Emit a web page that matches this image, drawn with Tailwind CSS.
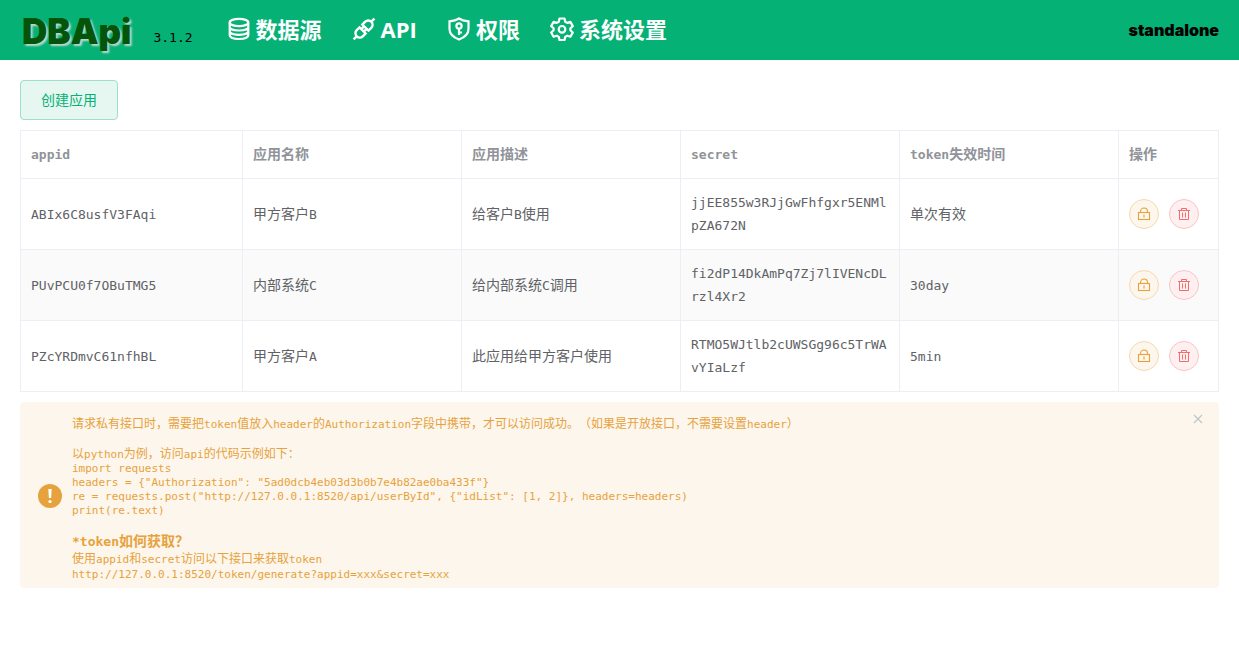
<!DOCTYPE html>
<html lang="zh-CN">
<head>
<meta charset="utf-8">
<meta name="viewport" content="width=device-width, initial-scale=1">
<title>DBApi</title>
<script src="https://cdn.jsdelivr.net/npm/@tailwindcss/browser@4"></script>
</head>
<body class="bg-white font-['DejaVu_Sans_Mono','Noto_Sans_CJK_SC',monospace] text-[13px] text-[#606266]">
<svg class="hidden" aria-hidden="true">
  <symbol id="lock" viewBox="0 0 14 14" fill="none" stroke="currentColor" stroke-width="1.1"><rect x="1.500" y="5.500" width="11" height="7"/><path d="M3.500 5.500V4.500a3.500 3.500 0 0 1 7 0V5.500M7 7.500v3"/></symbol>
  <symbol id="trash" viewBox="0 0 14 14" fill="none" stroke="currentColor" stroke-width="1"><path d="M1 3.500h12M2.500 3.500v9h9v-9M4.500 3V1.500h5V3M5.500 5.500v5M8.500 5.500v5"/></symbol>
</svg>
<header class="flex h-15 items-center bg-[#06b176] px-5">
  <a href="#" class="pt-0.5 pl-0.5 font-['Inter',sans-serif] text-[35px] leading-none font-black text-[#045509] [text-shadow:2px_2px_2px_#c0d8cc]">DBApi</a>
  <span class="mt-4 ml-[22px] text-black">3.1.2</span>
  <nav class="ml-[34px] flex items-center gap-[30px] pb-0.5 font-['Open_Sans','Noto_Sans_CJK_SC',sans-serif] text-[22px] leading-8 font-bold text-white">
    <a href="#" class="flex items-center gap-[5px]">
      <svg class="size-6" viewBox="0 0 24 24" fill="none" stroke="currentColor" stroke-width="2.200"><ellipse cx="12" cy="5.500" rx="9.300" ry="3.700"/><path d="M2.700 5.500v12.800c0 2.200 4 3.700 9.300 3.700s9.300-1.500 9.300-3.700V5.500M2.700 10c0 2 4 3.500 9.300 3.500s9.300-1.500 9.300-3.500M2.700 14.300c0 2 4 3.500 9.300 3.500s9.300-1.500 9.300-3.500"/></svg>
      数据源</a>
    <a href="#" class="flex items-center gap-[5px]">
      <svg class="size-6" viewBox="0 0 24 24" fill="none" stroke="currentColor" stroke-width="2.400"><g transform="translate(12 12) rotate(-45)"><path d="M-2-4.300v8.600H-6a4.300 4.300 0 0 1 0-8.600zM2-4.300v8.600H6A4.300 4.300 0 0 0 6-4.300zM-10.300 0h-4.500M10.300 0h4.500M-2-1.800h4M-2 1.800h4"/></g></svg>
      API</a>
    <a href="#" class="flex items-center gap-[5px]">
      <svg class="size-6" viewBox="0 0 24 24" fill="none" stroke="currentColor" stroke-width="2.200"><path d="M12 1.500C9 3.500 6 4 2.500 4.300V12c0 5 4.300 8.500 9.500 10.500 5.200-2 9.500-5.500 9.500-10.500V4.300C18 4 15 3.500 12 1.500z"/><circle cx="12" cy="9" r="2.600"/><path d="M12 11.500V18M12 15.500h3"/></svg>
      权限</a>
    <a href="#" class="flex items-center gap-[5px]">
      <svg class="size-6" viewBox="0 0 24 24" fill="none" stroke="currentColor" stroke-width="2.200" stroke-linejoin="round"><path d="M9.500 1.500h5l.7 3.200 2 1.200 3.200-1 2.400 4.200-2.400 2.200v2l2.400 2.200-2.400 4.200-3.200-1-2 1.200-.7 3.200h-5l-.7-3.200-2-1.200-3.200 1-2.400-4.200 2.400-2.200v-2L1.200 9.100l2.400-4.200 3.200 1 2-1.200z"/><circle cx="12" cy="12.300" r="3.300"/></svg>
      系统设置</a>
  </nav>
  <span class="ml-auto font-['Inter',sans-serif] text-base font-black text-black">standalone</span>
</header>
<main class="px-5 pt-5">
  <button type="button" class="block h-10 rounded border border-[#9be0c8] bg-[#e6f7f1] px-5 text-[14px] text-[#06b176]">创建应用</button>
  <table class="mt-2.5 w-full table-fixed border-collapse border border-[#ebeef5] text-left leading-[23px] [&_td]:border [&_td]:border-[#ebeef5] [&_td]:px-2.5 [&_td]:py-3 [&_th]:border [&_th]:border-[#ebeef5] [&_th]:px-2.5 [&_th]:py-3">
    <colgroup><col class="w-[222px]"><col><col><col><col><col class="w-[100px]"></colgroup>
    <thead class="text-[#909399]">
      <tr><th>appid</th><th><span class="text-[14px]">应用名称</span></th><th><span class="text-[14px]">应用描述</span></th><th>secret</th><th>token<span class="text-[14px]">失效时间</span></th><th><span class="text-[14px]">操作</span></th></tr>
    </thead>
    <tbody>
      <tr><td>ABIx6C8usfV3FAqi</td><td><span class="text-[14px]">甲方客户</span>B</td><td><span class="text-[14px]">给客户</span>B<span class="text-[14px]">使用</span></td><td class="break-all">jjEE855w3RJjGwFhfgxr5ENMlpZA672N</td><td><span class="text-[14px]">单次有效</span></td>
        <td><div class="flex gap-2.5"><button type="button" aria-label="锁定" class="grid size-[30px] shrink-0 place-items-center rounded-full border border-[#f5dab1] bg-[#fdf6ec] text-[#e6a23c]"><svg class="size-3.5"><use href="#lock"/></svg></button><button type="button" aria-label="删除" class="grid size-[30px] shrink-0 place-items-center rounded-full border border-[#fbc4c4] bg-[#fef0f0] text-[#f56c6c]"><svg class="size-3.5"><use href="#trash"/></svg></button></div></td></tr>
      <tr class="bg-[#fafafa]"><td>PUvPCU0f7OBuTMG5</td><td><span class="text-[14px]">内部系统</span>C</td><td><span class="text-[14px]">给内部系统</span>C<span class="text-[14px]">调用</span></td><td class="break-all">fi2dP14DkAmPq7Zj7lIVENcDLrzl4Xr2</td><td>30day</td>
        <td><div class="flex gap-2.5"><button type="button" aria-label="锁定" class="grid size-[30px] shrink-0 place-items-center rounded-full border border-[#f5dab1] bg-[#fdf6ec] text-[#e6a23c]"><svg class="size-3.5"><use href="#lock"/></svg></button><button type="button" aria-label="删除" class="grid size-[30px] shrink-0 place-items-center rounded-full border border-[#fbc4c4] bg-[#fef0f0] text-[#f56c6c]"><svg class="size-3.5"><use href="#trash"/></svg></button></div></td></tr>
      <tr><td>PZcYRDmvC61nfhBL</td><td><span class="text-[14px]">甲方客户</span>A</td><td><span class="text-[14px]">此应用给甲方客户使用</span></td><td class="break-all">RTMO5WJtlb2cUWSGg96c5TrWAvYIaLzf</td><td>5min</td>
        <td><div class="flex gap-2.5"><button type="button" aria-label="锁定" class="grid size-[30px] shrink-0 place-items-center rounded-full border border-[#f5dab1] bg-[#fdf6ec] text-[#e6a23c]"><svg class="size-3.5"><use href="#lock"/></svg></button><button type="button" aria-label="删除" class="grid size-[30px] shrink-0 place-items-center rounded-full border border-[#fbc4c4] bg-[#fef0f0] text-[#f56c6c]"><svg class="size-3.5"><use href="#trash"/></svg></button></div></td></tr>
    </tbody>
  </table>
  <section role="alert" class="relative mt-2.5 flex items-center gap-2.5 rounded bg-[#fdf6ec] pt-2 pr-4 pb-1.5 pl-[18px] text-[11px] leading-[14px] text-[#e6a23c]">
    <svg class="size-6 shrink-0" viewBox="0 0 24 24"><circle cx="12" cy="12" r="12" fill="currentColor"/><path d="M10.300 5h3.400l-.6 9h-2.200z" fill="#fff"/><circle cx="12" cy="17.500" r="1.600" fill="#fff"/></svg>
    <div class="pt-1.5 [text-spacing-trim:space-all]">
      <p class="leading-4"><span class="text-[12px]">请求私有接口时，需要把</span>token<span class="text-[12px]">值放入</span>header<span class="text-[12px]">的</span>Authorization<span class="text-[12px]">字段中携带，才可以访问成功。（如果是开放接口，不需要设置</span>header<span class="text-[12px]">）</span></p>
      <p class="mt-3.5"><span class="text-[12px]">以</span>python<span class="text-[12px]">为例，访问</span>api<span class="text-[12px]">的代码示例如下：</span></p>
      <pre class="font-[inherit]">import requests
headers = {"Authorization": "5ad0dcb4eb03d3b0b7e4b82ae0ba433f"}
re = requests.post("http://127.0.0.1:8520/api/userById", {"idList": [1, 2]}, headers=headers)
print(re.text)</pre>
      <h3 class="mt-3.5 text-[13px] leading-[18px] font-bold">*token<span class="text-[14px]">如何获取？</span></h3>
      <p class="leading-4"><span class="text-[12px]">使用</span>appid<span class="text-[12px]">和</span>secret<span class="text-[12px]">访问以下接口来获取</span>token</p>
      <p>http://127.0.0.1:8520/token/generate?appid=xxx&amp;secret=xxx</p>
    </div>
    <button type="button" aria-label="关闭" class="absolute top-3 right-4 text-[#c0c4cc]"><svg class="size-2.5" viewBox="0 0 10 10" stroke="currentColor" stroke-width="1.200"><path d="M1 1l8 8M9 1l-8 8"/></svg></button>
  </section>
</main>
</body>
</html>
